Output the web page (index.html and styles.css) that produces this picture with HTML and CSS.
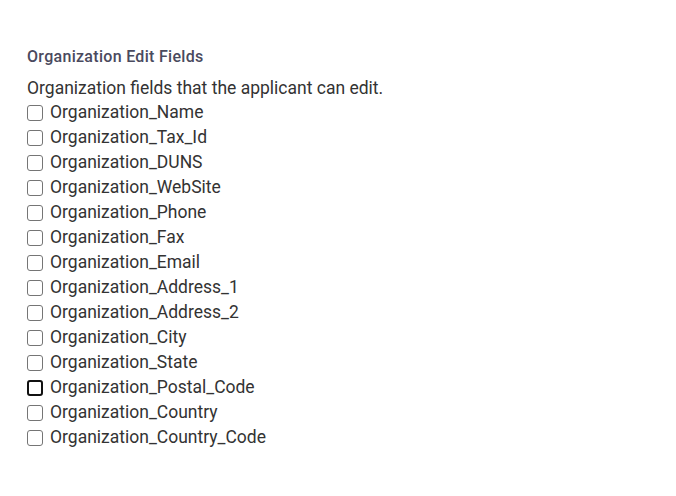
FILE: index.html
```html
<!DOCTYPE html>
<html lang="en">
<head>
    <meta charset="UTF-8">
    <meta name="viewport" content="width=device-width, initial-scale=1.0">
    <title>Organization Edit Fields</title>
    <link rel="stylesheet" href="styles.css">
</head>
<body>
    <div class="section">
        <h3 class="section-title">Organization Edit Fields</h3>
        <p class="section-desc">Organization fields that the applicant can edit.</p>
        <div class="field-list">
            <label class="field"><input type="checkbox"> Organization_Name</label>
            <label class="field"><input type="checkbox"> Organization_Tax_Id</label>
            <label class="field"><input type="checkbox"> Organization_DUNS</label>
            <label class="field"><input type="checkbox"> Organization_WebSite</label>
            <label class="field"><input type="checkbox"> Organization_Phone</label>
            <label class="field"><input type="checkbox"> Organization_Fax</label>
            <label class="field"><input type="checkbox"> Organization_Email</label>
            <label class="field"><input type="checkbox"> Organization_Address_1</label>
            <label class="field"><input type="checkbox"> Organization_Address_2</label>
            <label class="field"><input type="checkbox"> Organization_City</label>
            <label class="field"><input type="checkbox"> Organization_State</label>
            <label class="field"><input type="checkbox" class="focused"> Organization_Postal_Code</label>
            <label class="field"><input type="checkbox"> Organization_Country</label>
            <label class="field"><input type="checkbox"> Organization_Country_Code</label>
        </div>
    </div>
</body>
</html>
```

FILE: styles.css
```css
* {
    margin: 0;
    padding: 0;
    box-sizing: border-box;
    font-family: Roboto, 'Liberation Sans', sans-serif;
}

body {
    background-color: #ffffff;
    color: #333333;
}

.section {
    padding: 47px 27px 0;
}

.section-title {
    font-size: 16px;
    font-weight: 500;
    color: #4a4a5e;
    letter-spacing: 0.3px;
    line-height: 20px;
    margin-bottom: 9px;
}

.section-desc {
    font-size: 17.5px;
    line-height: 24px;
}

.field-list {
    display: flex;
    flex-direction: column;
}

.field {
    display: flex;
    align-items: center;
    gap: 7px;
    font-size: 17.5px;
    line-height: 25px;
    color: #333333;
}

.field input {
    appearance: none;
    width: 16px;
    height: 16px;
    border: 1px solid #757575;
    border-radius: 3px;
    background: white;
    flex-shrink: 0;
}

.field input.focused {
    border: 2px solid #111111;
}
```
